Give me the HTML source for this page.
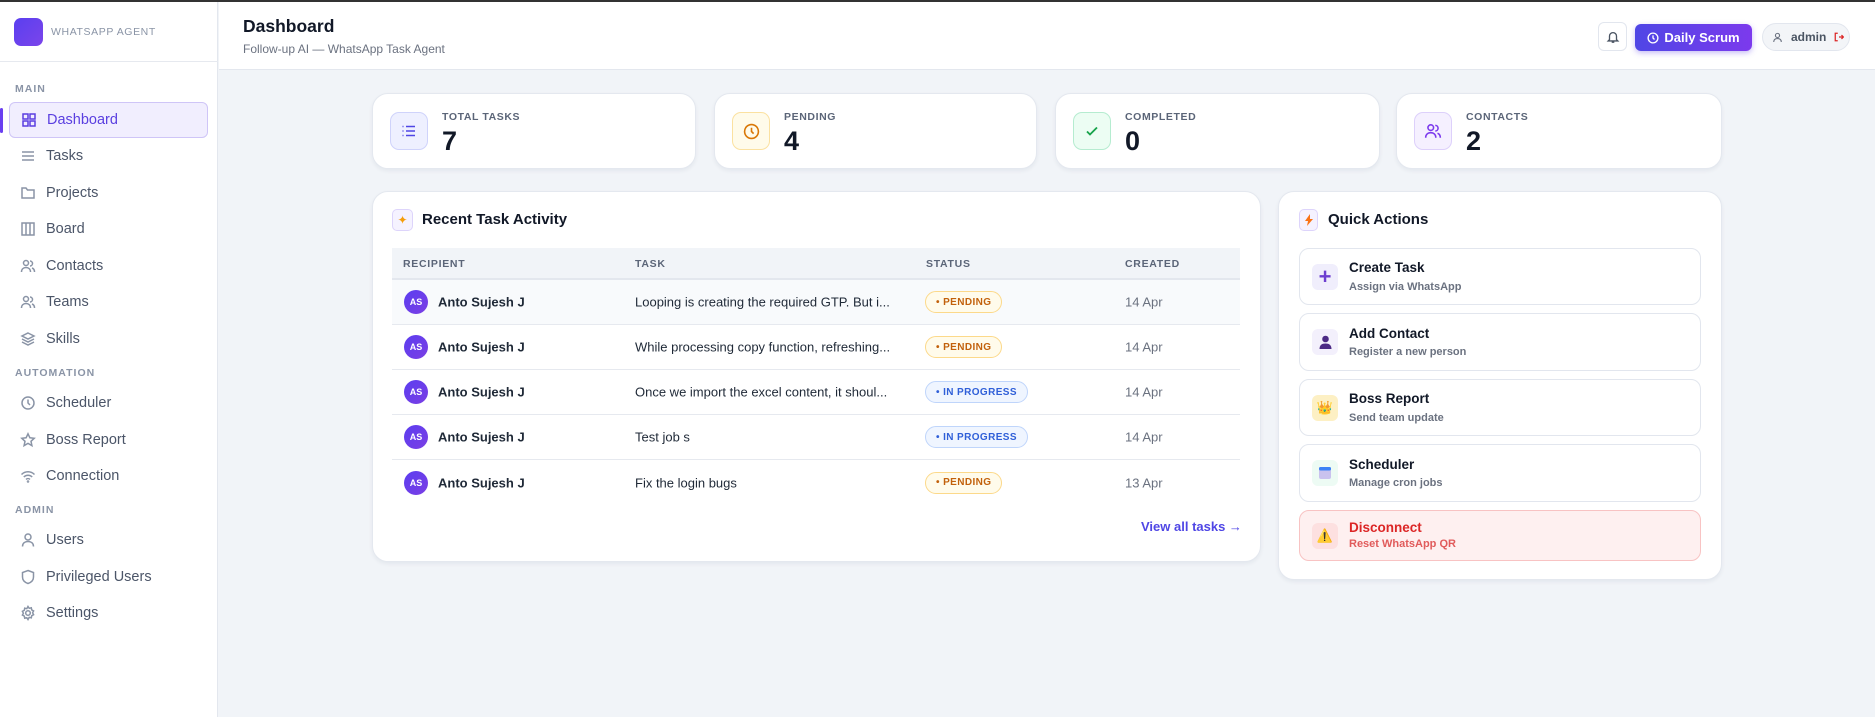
<!DOCTYPE html>
<html><head><meta charset="utf-8"><style>
*{box-sizing:border-box;margin:0;padding:0}
body{width:1875px;height:715px;overflow:hidden;background:#f1f4f8;font-family:"Liberation Sans",sans-serif;position:relative;border-top:2px solid #333}
.a{position:absolute}
.sb{left:0;top:0;width:218px;height:715px;background:#fff;border-right:1px solid #e3e7ee}
.nav{position:absolute;left:9px;width:199px;height:36px;display:flex;align-items:center;padding-left:11px;font-size:14.5px;color:#4b5568}
.nav svg{width:16px;height:16px;margin-right:10px;stroke:#8a94a6;fill:none;stroke-width:1.5}
.sec{position:absolute;left:15px;font-size:10.5px;font-weight:bold;color:#8a94a6;letter-spacing:1px}
.card{position:absolute;background:#fff;border-radius:16px;border:1px solid #e4e8ef;box-shadow:0 2px 4px rgba(20,30,60,.06)}
.st .ib{position:absolute;left:17px;top:18px;width:38px;height:38px;border-radius:9px;display:flex;align-items:center;justify-content:center}
.st .lb{position:absolute;left:69px;top:17px;font-size:10.5px;font-weight:bold;color:#5b6578;letter-spacing:.6px}
.st .n{position:absolute;left:69px;top:32px;font-size:27px;font-weight:900;color:#111827}
.th{font-size:10.5px;font-weight:bold;color:#5b6578;letter-spacing:.7px}
.row{position:absolute;left:392px;width:848px;height:45px;border-bottom:1px solid #e6e9ef;font-size:13px;color:#1f2937}
.row>*{position:absolute;top:50%;transform:translateY(-50%)}
.av{left:12px;width:24px;height:24px;border-radius:50%;background:linear-gradient(135deg,#5b3df0,#7b3fe4);color:#fff;font-size:9px;font-weight:bold;display:flex;align-items:center;justify-content:center;transform:translateY(-50%)}
.nm{left:46px;font-weight:bold;font-size:13px}
.tk{left:243px}
.bd{left:533px;height:22px;padding:0 10px;border-radius:11px;font-size:10px;font-weight:bold;display:flex;align-items:center;letter-spacing:.4px}
.pe{background:#fffbeb;border:1px solid #fcd98a;color:#c2610c}
.ip{background:#eff5ff;border:1px solid #bfd5fb;color:#2f5fd8}
.dt{left:733px;color:#6b7280}
.qa{position:absolute;left:1299px;width:402px;border:1px solid #e2e6ee;border-radius:10px;background:#fff}
.qa .qi{position:absolute;left:12px;top:50%;margin-top:-13px;width:26px;height:26px;border-radius:6px;display:flex;align-items:center;justify-content:center;font-size:13px}
.qa .t{position:absolute;left:49px;font-size:13.5px;font-weight:bold;color:#111827}
.qa .s{position:absolute;left:49px;font-size:11px;color:#6b7280;font-weight:bold}
</style></head><body>
<div class="a sb">
 <div class="a" style="left:14px;top:16px;width:29px;height:28px;border-radius:7px;background:linear-gradient(135deg,#5a3ff0,#7b45ea)"></div>
 <div class="a" style="left:51px;top:24px;font-size:10.5px;color:#8a94a6;letter-spacing:.6px">WHATSAPP AGENT</div>
 <div class="a" style="left:0;top:59px;width:218px;border-top:1px solid #e6e9ef"></div>
 <div class="sec" style="top:81px">MAIN</div>
 <div class="a" style="left:0;top:106px;width:3px;height:25px;background:#6a3ff0;border-radius:2px"></div>
 <div class="nav" style="top:100px;background:#f1eefe;border:1px solid #cfc5f7;border-radius:6px;color:#5a3fe0"><svg viewBox="0 0 16 16" style="stroke:#5a3fe0"><rect x="2" y="2" width="5" height="5"/><rect x="9" y="2" width="5" height="5"/><rect x="2" y="9" width="5" height="5"/><rect x="9" y="9" width="5" height="5"/></svg>Dashboard</div>
 <div class="nav" style="top:136px"><svg viewBox="0 0 16 16"><path d="M2 4h12M2 8h12M2 12h12"/></svg>Tasks</div>
 <div class="nav" style="top:173px"><svg viewBox="0 0 16 16"><path d="M2 3h4l1.5 2H14v8H2z"/></svg>Projects</div>
 <div class="nav" style="top:209px"><svg viewBox="0 0 16 16"><rect x="2" y="2" width="12" height="12"/><path d="M6 2v12M10 2v12"/></svg>Board</div>
 <div class="nav" style="top:246px"><svg viewBox="0 0 16 16"><circle cx="6" cy="5" r="2.5"/><path d="M1.5 14c0-3 2-4.5 4.5-4.5S10.5 11 10.5 14M10 3a2.5 2.5 0 010 5M12 10c1.5.5 2.5 2 2.5 4"/></svg>Contacts</div>
 <div class="nav" style="top:282px"><svg viewBox="0 0 16 16"><circle cx="6" cy="5" r="2.5"/><path d="M1.5 14c0-3 2-4.5 4.5-4.5S10.5 11 10.5 14M10 3a2.5 2.5 0 010 5M12 10c1.5.5 2.5 2 2.5 4"/></svg>Teams</div>
 <div class="nav" style="top:319px"><svg viewBox="0 0 16 16"><path d="M8 2l6 3-6 3-6-3zM2 8l6 3 6-3M2 11l6 3 6-3"/></svg>Skills</div>
 <div class="sec" style="top:365px">AUTOMATION</div>
 <div class="nav" style="top:383px"><svg viewBox="0 0 16 16"><circle cx="8" cy="8" r="6"/><path d="M8 4.5V8l2 2"/></svg>Scheduler</div>
 <div class="nav" style="top:420px"><svg viewBox="0 0 16 16"><path d="M8 1.8l1.9 4 4.3.5-3.2 3 .9 4.3L8 11.4l-3.9 2.2.9-4.3-3.2-3 4.3-.5z"/></svg>Boss Report</div>
 <div class="nav" style="top:456px"><svg viewBox="0 0 16 16"><path d="M1.5 6.5a9 9 0 0113 0M3.8 9a6 6 0 018.4 0M6 11.4a3 3 0 014 0"/><circle cx="8" cy="13.5" r=".5"/></svg>Connection</div>
 <div class="sec" style="top:502px">ADMIN</div>
 <div class="nav" style="top:520px"><svg viewBox="0 0 16 16"><circle cx="8" cy="5" r="3"/><path d="M2.5 14.5c0-3.5 2.5-5 5.5-5s5.5 1.5 5.5 5"/></svg>Users</div>
 <div class="nav" style="top:557px"><svg viewBox="0 0 16 16"><path d="M8 1.5l5.5 2v4.5c0 3.5-2.5 5.5-5.5 6.5-3-1-5.5-3-5.5-6.5V3.5z"/></svg>Privileged Users</div>
 <div class="nav" style="top:593px"><svg viewBox="0 0 16 16"><circle cx="8" cy="8" r="2.3"/><path d="M8 1.5l1.2 1.8 2.1-.5.4 2.1 1.9 1-1 1.9 1 1.9-1.9 1-.4 2.1-2.1-.5L8 14.5l-1.2-1.8-2.1.5-.4-2.1-1.9-1 1-1.9-1-1.9 1.9-1 .4-2.1 2.1.5z"/></svg>Settings</div>
</div>
<div class="a" style="left:219px;top:0;width:1656px;height:68px;background:#fff;border-bottom:1px solid #e3e7ee"></div>
<div class="a" style="left:243px;top:14px;font-size:17.5px;font-weight:bold;color:#111827">Dashboard</div>
<div class="a" style="left:243px;top:40px;font-size:12px;color:#6b7280">Follow-up AI — WhatsApp Task Agent</div>
<div class="a" style="left:1598px;top:20px;width:29px;height:29px;border:1px solid #e2e6ee;border-radius:6px;display:flex;align-items:center;justify-content:center"><svg width="14" height="14" viewBox="0 0 16 16" fill="none" stroke="#4b5563" stroke-width="1.5"><path d="M4 11V7a4 4 0 018 0v4l1.5 1.5h-11zM6.5 14h3"/></svg></div>
<div class="a" style="left:1635px;top:22px;width:117px;height:27px;border-radius:6px;background:linear-gradient(90deg,#4f46e5,#7c3aed);box-shadow:0 2px 6px rgba(90,60,230,.35);color:#fff;font-size:13px;font-weight:bold;display:flex;align-items:center;justify-content:center"><svg width="12" height="12" viewBox="0 0 16 16" fill="none" stroke="#fff" stroke-width="1.8" style="margin-right:5px"><circle cx="8" cy="8" r="6.5"/><path d="M8 4.5V8l2 2"/></svg>Daily Scrum</div>
<div class="a" style="left:1762px;top:21px;width:88px;height:28px;border-radius:14px;background:#f3f5f8;border:1px solid #e2e6ee;display:flex;align-items:center;padding-left:9px;font-size:12px;color:#4b5563;font-weight:bold"><svg width="11" height="11" viewBox="0 0 16 16" fill="none" stroke="#6b7280" stroke-width="1.6" style="margin-right:8px"><circle cx="8" cy="5" r="3"/><path d="M2.5 14.5c0-3.5 2.5-5 5.5-5s5.5 1.5 5.5 5"/></svg>admin<svg width="10" height="10" viewBox="0 0 16 16" fill="none" stroke="#dc2626" stroke-width="2" style="margin-left:8px"><path d="M6 2H2v12h4M8 8h7M12 5l3 3-3 3"/></svg></div>

<div class="card st" style="left:372px;top:91px;width:324px;height:76px"><div class="ib" style="background:#eef0ff;border:1px solid #cfd3fb"><svg width="16" height="16" viewBox="0 0 16 16" fill="none" stroke="#4f46e5" stroke-width="1.6"><path d="M5 3.5h9M5 8h9M5 12.5h9M1.5 3.5h1M1.5 8h1M1.5 12.5h1"/></svg></div><div class="lb">TOTAL TASKS</div><div class="n">7</div></div>
<div class="card st" style="left:714px;top:91px;width:323px;height:76px"><div class="ib" style="background:#fffbea;border:1px solid #fbe1a0"><svg width="17" height="17" viewBox="0 0 16 16" fill="none" stroke="#d97706" stroke-width="1.5"><circle cx="8" cy="8" r="6.5"/><path d="M8 4.5V8l2 2"/></svg></div><div class="lb">PENDING</div><div class="n">4</div></div>
<div class="card st" style="left:1055px;top:91px;width:325px;height:76px"><div class="ib" style="background:#ecfdf3;border:1px solid #b5ecd0"><svg width="16" height="16" viewBox="0 0 16 16" fill="none" stroke="#16a34a" stroke-width="1.8"><path d="M3 8.5l3 3 7-7"/></svg></div><div class="lb">COMPLETED</div><div class="n">0</div></div>
<div class="card st" style="left:1396px;top:91px;width:326px;height:76px"><div class="ib" style="background:#f5f0ff;border:1px solid #ddd0fb"><svg width="18" height="18" viewBox="0 0 16 16" fill="none" stroke="#7c3aed" stroke-width="1.4"><circle cx="6" cy="5" r="2.5"/><path d="M1.5 14c0-3 2-4.5 4.5-4.5S10.5 11 10.5 14M10 3a2.5 2.5 0 010 5M12 10c1.5.5 2.5 2 2.5 4"/></svg></div><div class="lb">CONTACTS</div><div class="n">2</div></div>

<div class="card" style="left:372px;top:189px;width:889px;height:371px"></div>
<div class="a" style="left:392px;top:207px;width:21px;height:22px;border-radius:5px;background:#f5f2ff;border:1px solid #ddd4fb;color:#f59e0b;font-size:12px;display:flex;align-items:center;justify-content:center">✦</div>
<div class="a" style="left:422px;top:209px;font-size:15px;font-weight:bold;color:#111827">Recent Task Activity</div>
<div class="a" style="left:392px;top:246px;width:848px;height:32px;background:#f1f4f8;border-bottom:2px solid #e3e7ee"></div>
<div class="a th" style="left:403px;top:256px">RECIPIENT</div>
<div class="a th" style="left:635px;top:256px">TASK</div>
<div class="a th" style="left:926px;top:256px">STATUS</div>
<div class="a th" style="left:1125px;top:256px">CREATED</div>
<div class="row" style="top:278px;background:#f8fafc"><div class="av">AS</div><div class="nm">Anto Sujesh J</div><div class="tk">Looping is creating the required GTP. But i...</div><div class="bd pe">• PENDING</div><div class="dt">14 Apr</div></div>
<div class="row" style="top:323px"><div class="av">AS</div><div class="nm">Anto Sujesh J</div><div class="tk">While processing copy function, refreshing...</div><div class="bd pe">• PENDING</div><div class="dt">14 Apr</div></div>
<div class="row" style="top:368px"><div class="av">AS</div><div class="nm">Anto Sujesh J</div><div class="tk">Once we import the excel content, it shoul...</div><div class="bd ip">• IN PROGRESS</div><div class="dt">14 Apr</div></div>
<div class="row" style="top:413px"><div class="av">AS</div><div class="nm">Anto Sujesh J</div><div class="tk">Test job s</div><div class="bd ip">• IN PROGRESS</div><div class="dt">14 Apr</div></div>
<div class="row" style="top:458px;border-bottom:none"><div class="av">AS</div><div class="nm">Anto Sujesh J</div><div class="tk">Fix the login bugs</div><div class="bd pe">• PENDING</div><div class="dt">13 Apr</div></div>
<div class="a" style="left:1141px;top:517px;font-size:13px;font-weight:bold;color:#4f46e5">View all tasks →</div>

<div class="card" style="left:1278px;top:189px;width:444px;height:389px"></div>
<div class="a" style="left:1299px;top:207px;width:19px;height:22px;border-radius:5px;background:#f5f2ff;border:1px solid #ddd4fb;display:flex;align-items:center;justify-content:center"><svg width="8" height="12" viewBox="0 0 8 12"><path d="M5 0L0 7h3l-1 5 6-7H5z" fill="#f97316"/></svg></div>
<div class="a" style="left:1328px;top:209px;font-size:15px;font-weight:bold;color:#111827">Quick Actions</div>
<div class="qa" style="top:246px;height:57px"><div class="qi" style="background:#f0eefc;color:#6d3fd0;font-size:22px;font-weight:bold">+</div><div class="t" style="top:11px">Create Task</div><div class="s" style="top:32px">Assign via WhatsApp</div></div>
<div class="qa" style="top:311px;height:58px"><div class="qi" style="background:#f3f0fc"><svg width="13" height="14" viewBox="0 0 13 14"><circle cx="6.5" cy="4" r="3.3" fill="#4c2a85"/><path d="M0.5 14c0-4 2.5-5.5 6-5.5s6 1.5 6 5.5z" fill="#4c2a85"/></svg></div><div class="t" style="top:12px">Add Contact</div><div class="s" style="top:32px">Register a new person</div></div>
<div class="qa" style="top:377px;height:57px"><div class="qi" style="background:#fdf0c4">👑</div><div class="t" style="top:11px">Boss Report</div><div class="s" style="top:32px">Send team update</div></div>
<div class="qa" style="top:442px;height:58px"><div class="qi" style="background:#edfbf4"><svg width="14" height="14" viewBox="0 0 14 14"><rect x="1" y="1" width="12" height="12" rx="2" fill="#c9c2ee"/><rect x="1" y="1" width="12" height="3.5" rx="1.5" fill="#3b82f6"/></svg></div><div class="t" style="top:12px">Scheduler</div><div class="s" style="top:32px">Manage cron jobs</div></div>
<div class="qa" style="top:508px;height:51px;background:#fef0f0;border-color:#f8c3c3"><div class="qi" style="background:#fde0e0">⚠️</div><div class="t" style="top:9px;color:#dc2626">Disconnect</div><div class="s" style="top:27px;color:#e15b5b">Reset WhatsApp QR</div></div>
</body></html>
